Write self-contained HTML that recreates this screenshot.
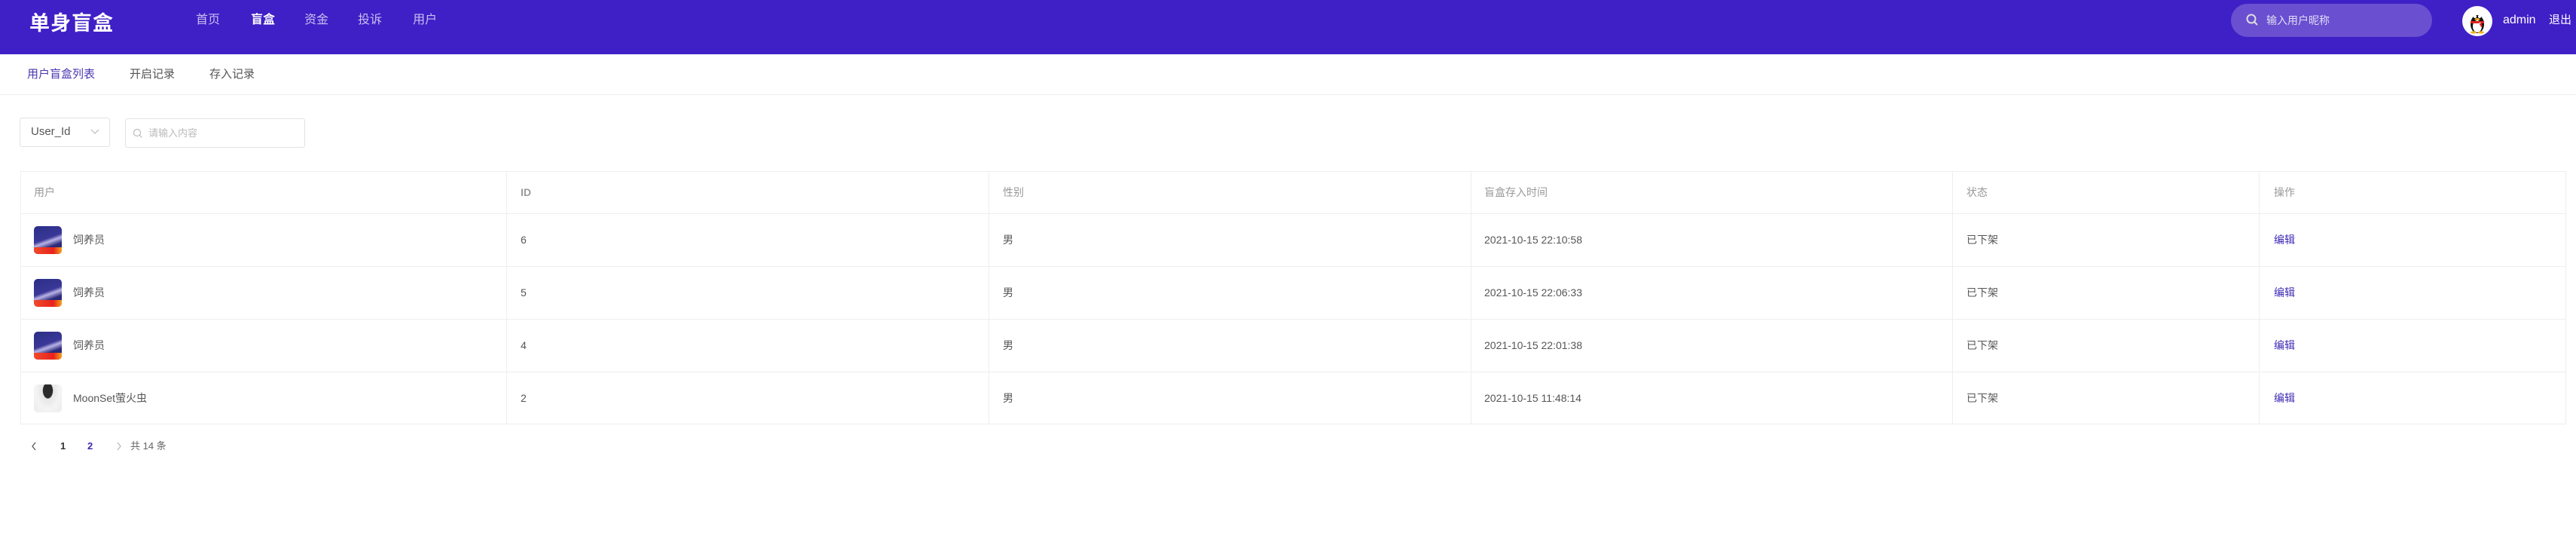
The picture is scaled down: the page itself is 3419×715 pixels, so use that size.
<!DOCTYPE html>
<html><head><meta charset="utf-8"><style>
*{margin:0;padding:0;box-sizing:border-box}
body{width:3419px;height:715px;background:#fff;position:relative;overflow:hidden;font-family:"Liberation Sans","Noto Sans CJK SC",sans-serif;color:#555}
.a{position:absolute;white-space:nowrap;line-height:20px}
.hdr{position:absolute;left:0;top:0;width:3419px;height:72px;background:#3f1fc6}
.nav{font-size:16px;color:#c9c0f0;top:17px}
.sub{font-size:15px;top:89px;color:#555}
.th{font-size:14px;color:#999;top:245px}
.td{font-size:14px;color:#555}
.vl{position:absolute;top:227px;width:1px;height:336px;background:#eee}
.hl{position:absolute;left:27px;width:3379px;height:1px;background:#eee}
.av{position:absolute;left:45px;width:37px;height:37px;border-radius:5px;overflow:hidden;background:linear-gradient(160deg,#2a2f86 0%,#3a3798 45%,#b9b3e6 55%,#2c2a7a 70%);}
.av i{position:absolute;left:0;bottom:0;width:37px;height:9px;background:linear-gradient(90deg,#f04a2a,#e8231d 70%,#f7a21b)}
.av2{position:absolute;left:45px;width:37px;height:37px;border-radius:5px;overflow:hidden;background:radial-gradient(ellipse at 50% 22%,#2a2a2a 0 24%,#e6e6e6 27%,#f4f4f4 60%,#ebebeb)}
</style></head><body>
<div class="hdr"></div>
<div class="a" style="left:39px;top:16px;font-size:27px;line-height:30px;font-weight:bold;color:#fff;letter-spacing:1px">单身盲盒</div>
<div class="a nav" style="left:260px">首页</div>
<div class="a nav" style="left:333px;color:#fff;font-weight:bold">盲盒</div>
<div class="a nav" style="left:404px">资金</div>
<div class="a nav" style="left:475px">投诉</div>
<div class="a nav" style="left:548px">用户</div>
<div class="a" style="left:2961px;top:5px;width:267px;height:44px;border-radius:22px;background:#6a4fd1"></div>
<svg class="a" style="left:2981px;top:18px" width="17" height="17" viewBox="0 0 17 17"><circle cx="7" cy="7" r="5.5" fill="none" stroke="#ddd" stroke-width="2"/><path d="M11 11l4 4" stroke="#ddd" stroke-width="2"/></svg>
<div class="a" style="left:3008px;top:17px;font-size:14px;color:#e0dcf5">输入用户昵称</div>
<svg class="a" style="left:3268px;top:8px" width="40" height="40" viewBox="0 0 40 40"><circle cx="20" cy="20" r="20" fill="#fff"/><ellipse cx="20" cy="24" rx="9" ry="12" fill="#111"/><ellipse cx="20" cy="27" rx="6" ry="8" fill="#fff"/><circle cx="17" cy="14" r="2" fill="#fff"/><circle cx="23" cy="14" r="2" fill="#fff"/><ellipse cx="20" cy="17.5" rx="3.5" ry="1.5" fill="#f2b01e"/><path d="M11 20h18v3h-18z M22 22l3 6 2-1-2-5z" fill="#e0201e"/><ellipse cx="15" cy="35" rx="4" ry="1.6" fill="#f2b01e"/><ellipse cx="25" cy="35" rx="4" ry="1.6" fill="#f2b01e"/></svg>
<div class="a" style="left:3322px;top:17px;font-size:16px;color:#fff">admin</div>
<div class="a" style="left:3383px;top:17px;font-size:15px;color:#fff">退出</div>

<div class="a sub" style="left:36px;color:#4a36b0">用户盲盒列表</div>
<div class="a sub" style="left:172px">开启记录</div>
<div class="a sub" style="left:278px">存入记录</div>
<div class="a" style="left:0;top:125px;width:3419px;height:1px;background:#eee"></div>

<div class="a" style="left:26px;top:156px;width:120px;height:39px;border:1px solid #e2e2e2;border-radius:3px"></div>
<div class="a" style="left:41px;top:165px;font-size:15px;color:#555">User_Id</div>
<svg class="a" style="left:120px;top:171px" width="12" height="8" viewBox="0 0 12 8"><path d="M1 1l5 5 5-5" fill="none" stroke="#bbb" stroke-width="1.2"/></svg>
<div class="a" style="left:166px;top:157px;width:239px;height:39px;border:1px solid #e2e2e2;border-radius:3px"></div>
<svg class="a" style="left:176px;top:170px" width="14" height="14" viewBox="0 0 14 14"><circle cx="6" cy="6" r="4.5" fill="none" stroke="#bbb" stroke-width="1.2"/><path d="M9.5 9.5l3 3" stroke="#bbb" stroke-width="1.2"/></svg>
<div class="a" style="left:197px;top:167px;font-size:13px;color:#bbb">请输入内容</div>

<div class="a" style="left:27px;top:227px;width:3379px;height:336px;border:1px solid #eee"></div>
<div class="hl" style="top:283px"></div>
<div class="hl" style="top:353px"></div>
<div class="hl" style="top:423px"></div>
<div class="hl" style="top:493px"></div>
<div class="vl" style="left:672px"></div>
<div class="vl" style="left:1312px"></div>
<div class="vl" style="left:1952px"></div>
<div class="vl" style="left:2591px"></div>
<div class="vl" style="left:2998px"></div>

<div class="a th" style="left:45px">用户</div>
<div class="a th" style="left:691px;font-weight:bold">ID</div>
<div class="a th" style="left:1331px">性别</div>
<div class="a th" style="left:1970px">盲盒存入时间</div>
<div class="a th" style="left:2610px">状态</div>
<div class="a th" style="left:3018px">操作</div>

<div class="av" style="top:300px"><i></i></div>
<div class="av" style="top:370px"><i></i></div>
<div class="av" style="top:440px"><i></i></div>
<div class="av2" style="top:510px"></div>

<div class="a td" style="left:97px;top:308px">饲养员</div>
<div class="a td" style="left:691px;top:308px">6</div>
<div class="a td" style="left:1331px;top:308px">男</div>
<div class="a td" style="left:1970px;top:308px">2021-10-15 22:10:58</div>
<div class="a td" style="left:2610px;top:308px">已下架</div>
<div class="a td" style="left:3018px;top:308px;color:#3d2ab5">编辑</div>

<div class="a td" style="left:97px;top:378px">饲养员</div>
<div class="a td" style="left:691px;top:378px">5</div>
<div class="a td" style="left:1331px;top:378px">男</div>
<div class="a td" style="left:1970px;top:378px">2021-10-15 22:06:33</div>
<div class="a td" style="left:2610px;top:378px">已下架</div>
<div class="a td" style="left:3018px;top:378px;color:#3d2ab5">编辑</div>

<div class="a td" style="left:97px;top:448px">饲养员</div>
<div class="a td" style="left:691px;top:448px">4</div>
<div class="a td" style="left:1331px;top:448px">男</div>
<div class="a td" style="left:1970px;top:448px">2021-10-15 22:01:38</div>
<div class="a td" style="left:2610px;top:448px">已下架</div>
<div class="a td" style="left:3018px;top:448px;color:#3d2ab5">编辑</div>

<div class="a td" style="left:97px;top:518px">MoonSet萤火虫</div>
<div class="a td" style="left:691px;top:518px">2</div>
<div class="a td" style="left:1331px;top:518px">男</div>
<div class="a td" style="left:1970px;top:518px">2021-10-15 11:48:14</div>
<div class="a td" style="left:2610px;top:518px">已下架</div>
<div class="a td" style="left:3018px;top:518px;color:#3d2ab5">编辑</div>

<svg class="a" style="left:41px;top:586px" width="8" height="12" viewBox="0 0 8 12"><path d="M6 1L2 6l4 5" fill="none" stroke="#555" stroke-width="1.3"/></svg>
<div class="a" style="left:80px;top:582px;font-size:13px;font-weight:bold;color:#333">1</div>
<div class="a" style="left:116px;top:582px;font-size:13px;font-weight:bold;color:#3d2ab5">2</div>
<svg class="a" style="left:154px;top:586px" width="8" height="12" viewBox="0 0 8 12"><path d="M2 1l4 5-4 5" fill="none" stroke="#bbb" stroke-width="1.3"/></svg>
<div class="a" style="left:173px;top:582px;font-size:13px;color:#666">共 14 条</div>
</body></html>
